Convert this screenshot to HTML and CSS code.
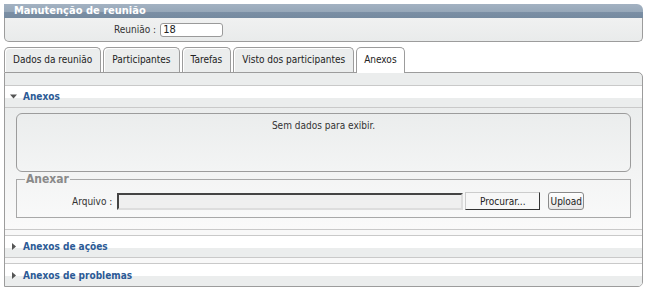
FILE: index.html
```html
<!DOCTYPE html>
<html>
<head>
  <title>Manutenção de reunião</title>
  <meta charset="utf-8">
  <link rel="stylesheet" href="styles.css">
</head>
<body>
  <div class="page">
    <div class="box">
      <div class="box-title">Manutenção de reunião</div>
      <div class="box-body">
        <label class="field-label" for="reuniao">Reunião :</label>
        <input class="field-input" id="reuniao" type="text" value="18">
      </div>
    </div>

    <ul class="tabs">
      <li class="tab">Dados da reunião</li>
      <li class="tab">Participantes</li>
      <li class="tab">Tarefas</li>
      <li class="tab">Visto dos participantes</li>
      <li class="tab active">Anexos</li>
    </ul>

    <div class="tab-panel">
      <div class="acc-head open">
        <svg class="arrow" width="7" height="7" viewBox="0 0 7 7"><path d="M0 1.5h7L3.5 5.5z" fill="#555"/></svg>
        Anexos
      </div>
      <div class="acc-body">
        <div class="grid-empty">Sem dados para exibir.</div>

        <fieldset class="attach">
          <legend>Anexar</legend>
          <div class="attach-row">
            <span class="attach-label">Arquivo :</span>
            <span class="file-path"></span>
            <button class="file-browse" type="button">Procurar...</button>
            <button class="upload" type="button">Upload</button>
          </div>
        </fieldset>
      </div>

      <div class="acc-head">
        <svg class="arrow" width="7" height="7" viewBox="0 0 7 7"><path d="M2 0v7l4-3.5z" fill="#555"/></svg>
        Anexos de ações
      </div>
      <div class="acc-head last">
        <svg class="arrow" width="7" height="7" viewBox="0 0 7 7"><path d="M2 0v7l4-3.5z" fill="#555"/></svg>
        Anexos de problemas
      </div>
    </div>
  </div>
</body>
</html>
```

FILE: styles.css
```css
body {
  margin: 0;
  font-family: "DejaVu Sans Condensed", "Liberation Sans", sans-serif;
  font-size: 10px;
  color: #333;
  background-color: #fff;
}

.page {
  padding: 4px 4px 0 4px;
}

/* top box */
.box-title {
  height: 14px;
  line-height: 14px;
  padding-left: 10px;
  color: #fff;
  font-weight: bold;
  font-size: 11px;
  background: linear-gradient(#a3b2c2 0, #97a8b9 55%, #7b8fa5 55%, #758a9f 100%);
  border-radius: 0 6px 0 0;
}

.box-body {
  display: flex;
  align-items: center;
  height: 23px;
  padding-left: 109px;
  border: 1px solid #9c9c9c;
  border-top: 0;
  border-radius: 0 0 5px 5px;
  background: linear-gradient(#f0f1f1, #e9ebeb);
}

.field-label {
  margin-right: 4px;
}

.field-input {
  width: 57px;
  height: 12px;
  padding: 0 2px;
  border: 1px solid #9a9a9a;
  border-radius: 3px;
  font-family: inherit;
  font-size: 11px;
  color: #222;
}

/* tabs */
.tabs {
  display: flex;
  gap: 2px;
  margin: 5px 0 0 0;
  padding: 0;
  list-style: none;
}

.tab {
  height: 24px;
  line-height: 24px;
  padding: 0 8px;
  border: 1px solid #9c9c9c;
  border-bottom: 0;
  border-radius: 5px 5px 0 0;
  background-color: #ebeded;
  box-shadow: inset 1px 1px 0 #fff;
  color: #222;
}

.tab.active {
  position: relative;
  margin-bottom: -1px;
  height: 25px;
  padding: 0 7px;
  background-color: #fff;
}

/* panel */
.tab-panel {
  padding-top: 12px;
  border: 1px solid #9c9c9c;
  border-radius: 0 5px 5px 0;
  background: linear-gradient(#ebeded 12px, #f8f8f8 12px);
  overflow: hidden;
}

.acc-head {
  display: flex;
  align-items: center;
  gap: 6px;
  height: 21px;
  padding-left: 5px;
  border-top: 1px solid #c9c9c9;
  border-bottom: 1px solid #c9c9c9;
  background: linear-gradient(#fff 12px, #ebeded 12px);
  color: #2b5a96;
  font-weight: bold;
}

.acc-head + .acc-head {
  margin-top: 5px;
}

.acc-head.last {
  border-bottom: 0;
  height: 22px;
}

.acc-body {
  padding: 5px 11px 11px 11px;
  border-bottom: 1px solid #c9c9c9;
  background: linear-gradient(#ebeded, #fafafa);
  margin-bottom: 5px;
}

.grid-empty {
  height: 51px;
  padding-top: 6px;
  border: 1px solid #9c9c9c;
  border-radius: 6px;
  text-align: center;
  background: linear-gradient(#ebeded, #f3f4f4);
}

.attach {
  margin: 0;
  padding: 6px 8px 7px 8px;
  border: 1px solid #a8a8a8;
}

.attach legend {
  padding: 0 1px;
  font-size: 12px;
  font-weight: bold;
  color: #8a8a8a;
}

.attach-row {
  display: flex;
  align-items: center;
  padding-left: 47px;
}

.attach-label {
  margin-right: 5px;
}

.file-path {
  width: 342px;
  height: 13px;
  border: 2px solid;
  border-color: #444 #ddd #ddd #444;
  background-color: #efefef;
}

.file-browse {
  width: 75px;
  height: 18px;
  margin-left: 2px;
  padding: 0;
  border: 1px solid;
  border-color: #ccc #333 #333 #ccc;
  background-color: #f7f7f7;
  font-family: inherit;
  font-size: 10px;
  color: #222;
}

.upload {
  width: 36px;
  height: 18px;
  margin-left: 8px;
  padding: 0;
  border: 1px solid #8a8a8a;
  border-radius: 3px;
  background: linear-gradient(#fff, #e6e6e6);
  font-family: inherit;
  font-size: 10px;
  color: #222;
}
```
